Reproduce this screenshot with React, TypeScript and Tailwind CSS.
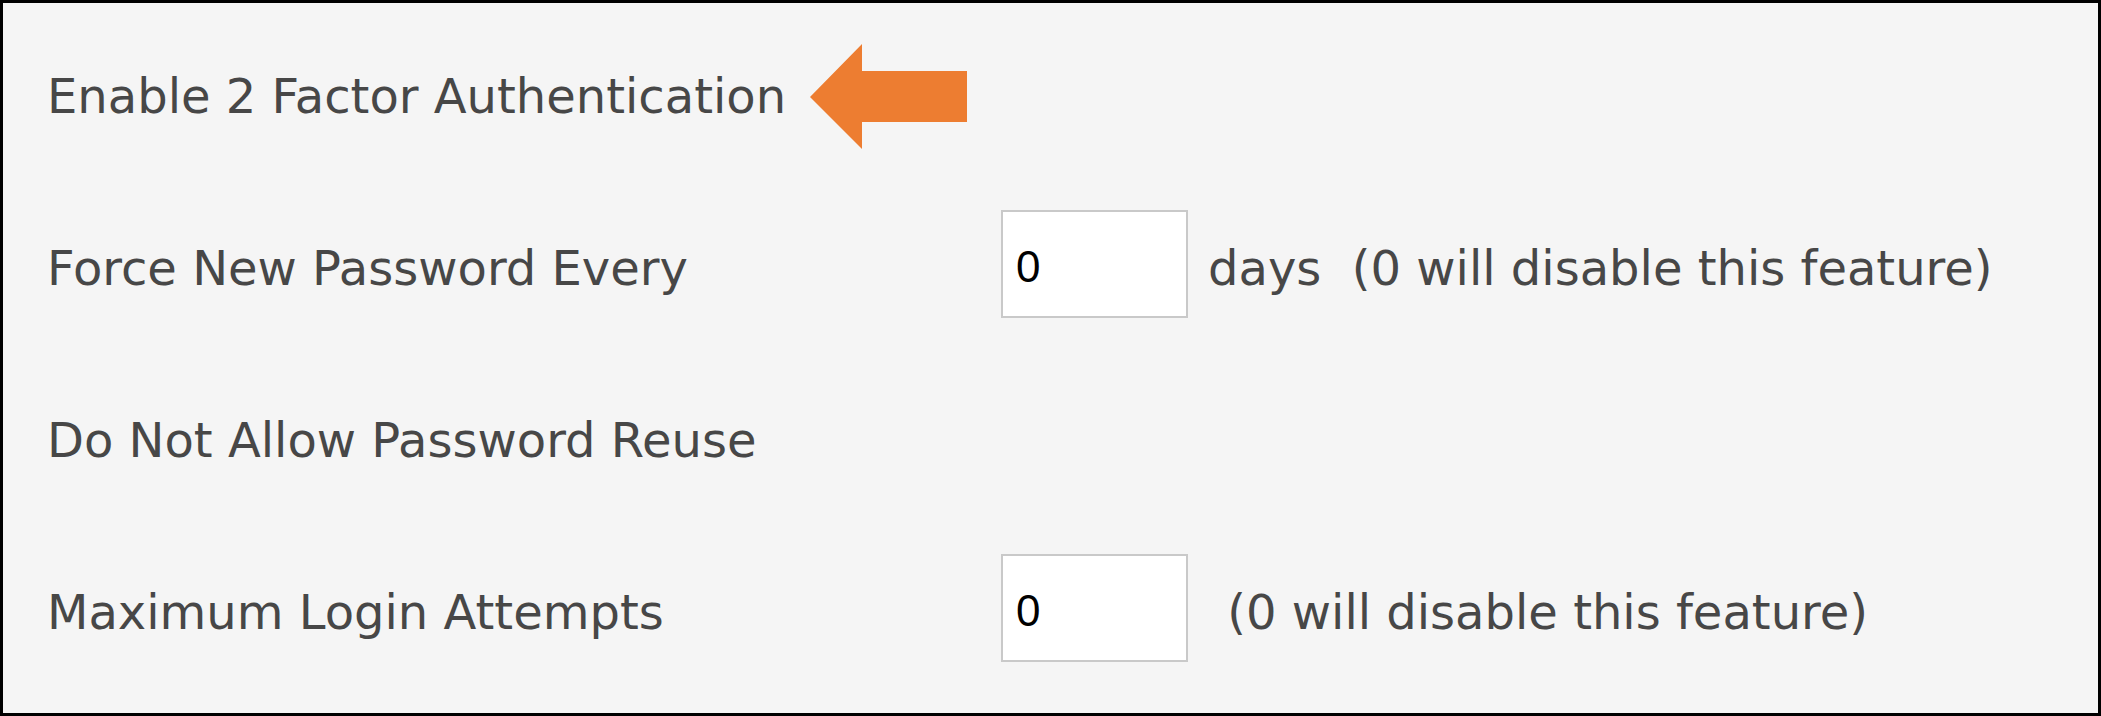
import type { FC } from 'react';

const LeftArrow: FC = () => (
    <svg width="157" height="105" viewBox="0 0 157 105" className="shrink-0">
        <polygon points="0,53 52,0 52,27 157,27 157,78 52,78 52,105" fill="#ED7D31" />
    </svg>
);

const NumberBox: FC<{ value: string }> = ({ value }) => (
    <div className="w-[187px] h-[108px] mb-[8px] shrink-0 bg-white border-2 border-[#c9c9c9] flex items-center pl-[13px] pt-[6px] text-[44px] text-black font-['Liberation_Sans',sans-serif]">
        {value}
    </div>
);

const App: FC = () => {
    return (
        <div className="w-[2101px] h-[716px] bg-[#f5f5f5] border-[3px] border-black font-['DejaVu_Sans',sans-serif] text-[48px] text-[#474747]">
            <div className="pl-[44px] pt-[7px] grid grid-cols-[954px_1fr]">
                {/* 2FA row */}
                <div className="h-[172px] flex items-center col-span-2">
                    <span>Enable 2 Factor Authentication</span>
                    <span className="ml-[24px] flex"><LeftArrow /></span>
                </div>

                {/* password age */}
                <div className="h-[172px] flex items-center">Force New Password Every</div>
                <div className="h-[172px] flex items-center">
                    <NumberBox value="0" />
                    <span className="ml-[20px] whitespace-pre">days  (0 will disable this feature)</span>
                </div>

                <div className="h-[172px] flex items-center col-span-2">Do Not Allow Password Reuse</div>

                {/* login attempts */}
                <div className="h-[172px] flex items-center">Maximum Login Attempts</div>
                <div className="h-[172px] flex items-center">
                    <NumberBox value="0" />
                    <span className="ml-[24px] whitespace-pre"> (0 will disable this feature)</span>
                </div>
            </div>
        </div>
    );
};

export default App;
